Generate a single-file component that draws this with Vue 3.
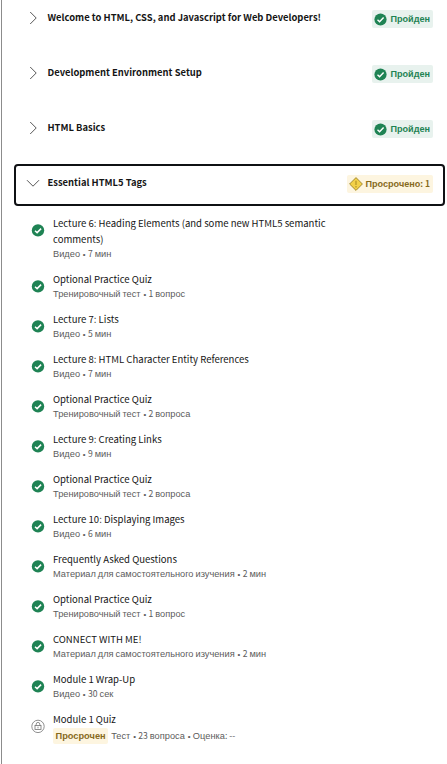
<script setup>
import { h } from 'vue'

const modules = [
  { title: 'Welcome to HTML, CSS, and Javascript for Web Developers!', status: 'done' },
  { title: 'Development Environment Setup', status: 'done' },
  { title: 'HTML Basics', status: 'done' },
  { title: 'Essential HTML5 Tags', status: 'late', open: true },
]

const items = [
  { title: 'Lecture 6: Heading Elements (and some new HTML5 semantic comments)', meta: 'Видео • 7 мин' },
  { title: 'Optional Practice Quiz', meta: 'Тренировочный тест • 1 вопрос' },
  { title: 'Lecture 7: Lists', meta: 'Видео • 5 мин' },
  { title: 'Lecture 8: HTML Character Entity References', meta: 'Видео • 7 мин' },
  { title: 'Optional Practice Quiz', meta: 'Тренировочный тест • 2 вопроса' },
  { title: 'Lecture 9: Creating Links', meta: 'Видео • 9 мин' },
  { title: 'Optional Practice Quiz', meta: 'Тренировочный тест • 2 вопроса' },
  { title: 'Lecture 10: Displaying Images', meta: 'Видео • 6 мин' },
  { title: 'Frequently Asked Questions', meta: 'Материал для самостоятельного изучения • 2 мин' },
  { title: 'Optional Practice Quiz', meta: 'Тренировочный тест • 1 вопрос' },
  { title: 'CONNECT WITH ME!', meta: 'Материал для самостоятельного изучения • 2 мин' },
  { title: 'Module 1 Wrap-Up', meta: 'Видео • 30 сек' },
  { title: 'Module 1 Quiz', meta: 'Тест • 23 вопроса • Оценка: --', locked: true },
]

// Cyrillic words use a different family from Latin letters, digits and marks.
const kind = (run) => (run === '•' ? 'dot' : /[А-Яа-я]/.test(run) ? 'cyr' : 'lat')
const Mixed = ({ text }) =>
  h('span', { class: 'mixed' }, text.split(/([А-Яа-я]+|•)/).filter(Boolean).map((run) =>
    h('span', { class: kind(run) }, run)))
Mixed.props = ['text']
</script>

<template>
  <main class="outline">
    <section v-for="m in modules" :key="m.title" class="module" :class="{ open: m.open }">
      <svg class="chevron" viewBox="0 0 14 14">
        <path :d="m.open ? 'M1 4.2 L7 10.2 L13 4.2' : 'M4.2 1 L10.2 7 L4.2 13'" />
      </svg>
      <h2 class="heading">{{ m.title }}</h2>
      <span v-if="m.status === 'done'" class="badge done">
        <svg class="badge-icon" viewBox="0 0 13 13">
          <circle cx="6.5" cy="6.5" r="6.1" fill="#1f8354" />
          <path d="M3.5 6.8 L5.6 8.8 L9.6 4.6" fill="none" stroke="#fff" stroke-width="1.4" />
        </svg>
        <Mixed class="badge-text" text="Пройден" />
      </span>
      <span v-else class="badge late">
        <svg class="warn-icon" viewBox="0 0 14 14">
          <path d="M7 .6 L13.4 7 L7 13.4 L.6 7 Z" fill="#f2d049" stroke="#9b8129" stroke-width=".9" stroke-linejoin="round" />
          <path d="M7 3.8 V8 M7 9 V10.5" stroke="#b8982a" stroke-width="1.3" />
        </svg>
        <Mixed class="badge-text" text="Просрочено: 1" />
      </span>
    </section>

    <ul class="items">
      <li v-for="(it, i) in items" :key="i" class="item">
        <svg v-if="it.locked" class="item-icon" viewBox="0 0 14 14">
          <g fill="none" stroke="#737373">
            <circle cx="7" cy="7.4" r="6.2" stroke-width=".8" />
            <rect x="4" y="6.5" width="6" height="4" stroke-width=".8" />
            <path d="M5.2 6.4 V5.2 Q5.2 3.4 7 3.4 Q8.8 3.4 8.8 5.2 V6.4 M7 7.7 V9.4" stroke-width=".8" />
          </g>
        </svg>
        <svg v-else class="item-icon" viewBox="0 0 14 14">
          <circle cx="7" cy="7.4" r="6.2" fill="#1f8354" />
          <path d="M4 7.7 L6.1 9.6 L10.1 5.6" fill="none" stroke="#fff" stroke-width="1.5" />
        </svg>
        <div class="body">
          <div class="title">{{ it.title }}</div>
          <div class="meta" :class="{ tagged: it.locked }">
            <span v-if="it.locked" class="tag"><Mixed text="Просрочен" /></span>
            <Mixed :text="it.meta" />
          </div>
        </div>
      </li>
    </ul>
  </main>
</template>

<style>
body {
  background: #fff;
}
.mixed {
  white-space: pre;
}
.cyr,
.dot {
  font-family: "Liberation Sans", Arial, sans-serif;
}
.lat {
  font-family: "Noto Sans CJK SC", sans-serif;
  font-size: 0.93em;
}
.dot {
  margin: 0 0.5px 0 0.9px;
  font-size: 0.85em;
}
</style>

<style scoped>
.outline {
  display: flow-root;
  box-sizing: border-box;
  height: 764px;
  margin-left: 1px;
  padding: 0 2px 0 12px;
  border-left: 1px solid #8c8c8c;
  font-family: "Noto Sans CJK SC", sans-serif;
  color: #151515;
}
.module {
  display: flex;
  align-items: flex-start;
  box-sizing: border-box;
  height: 42px;
  margin-bottom: 13px;
  padding: 10px 12px 0 12px;
}
.module:first-child {
  margin-top: -1px;
}
.module.open {
  margin-bottom: 9px;
  padding: 8px 10px 0 10px;
  border: 2px solid #0f1114;
  border-radius: 4px;
}
.chevron {
  width: 14px;
  height: 14px;
  margin-top: 2px;
  flex: none;
}
.chevron path {
  fill: none;
  stroke: #444;
  stroke-width: 0.9;
}
.heading {
  flex: 1;
  margin: 0 0 0 7.5px;
  font-size: 9.42px;
  line-height: 16px;
  font-weight: 700;
  white-space: nowrap;
}
.badge {
  display: flex;
  align-items: center;
  box-sizing: border-box;
  height: 18px;
  margin-top: 1px;
  padding: 0 3px 0 2px;
  border-radius: 2px;
  font-size: 9.1px;
  line-height: 16px;
  font-weight: 700;
}
.badge-text {
  padding-bottom: 2px;
}
.done {
  background: #e8f2ee;
  color: #1f8354;
}
.late {
  background: #fdf5e0;
  color: #876a1c;
}
.badge-icon {
  width: 13px;
  height: 13px;
  margin-right: 3.5px;
}
.warn-icon {
  width: 14px;
  height: 14px;
  margin-right: 2px;
}
.items {
  margin: 0;
  padding: 0 0 0 17px;
  list-style: none;
}
.item {
  display: flex;
  gap: 8px;
  margin-bottom: 12px;
}
.item-icon {
  width: 14px;
  height: 14px;
  margin-top: 8px;
  flex: none;
}
.title {
  width: 290px;
  font-size: 9.55px;
  line-height: 16px;
}
.meta {
  display: flex;
  height: 12px;
  font-size: 9.25px;
  line-height: 12px;
  color: #5c5c5c;
}
.meta.tagged {
  height: 16px;
  margin-top: 1px;
  line-height: 14px;
}
.tag {
  height: 16px;
  margin-right: 3px;
  padding: 0 2.5px;
  border-radius: 2px;
  background: #fdf5e0;
  color: #876a1c;
  font-weight: 700;
}
</style>
